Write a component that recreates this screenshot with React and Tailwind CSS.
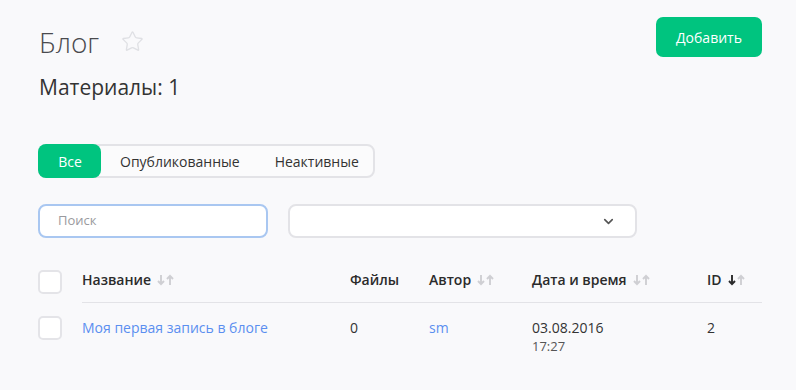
import { ChevronDown, Star } from "lucide-react";

function SortArrows({ active }) {
  return (
    <span className="ml-[6px] inline-flex items-center gap-[1px]">
      <svg width="8" height="12" viewBox="0 0 8 12" fill="none">
        <path
          d="M4 1v9M1 7l3 3.2L7 7"
          stroke={active === "down" ? "#2b2b2b" : "#cfcfd3"}
          strokeWidth="1.9"
        />
      </svg>
      <svg width="8" height="12" viewBox="0 0 8 12" fill="none">
        <path d="M4 11V2M1 5l3-3.2L7 5" stroke="#cfcfd3" strokeWidth="1.9" />
      </svg>
    </span>
  );
}

function Checkbox() {
  return (
    <div className="h-6 w-6 rounded-[5px] border-2 border-[#e4e4e8] bg-white" />
  );
}

export default function App() {
  return (
    <div
      className="min-h-screen bg-[#f9f9fb] pl-[38px] pr-[34px] pt-[17px] text-[#2b2b2b]"
      style={{ fontFamily: '"Open Sans", "Noto Sans", sans-serif' }}
    >
      <div className="flex items-start justify-between">
        <div>
          <div className="mt-[7px] flex items-center">
            <h1 className="pl-[1px] text-[28px] font-light leading-[36px] text-[#4a4a4e]">
              Блог
            </h1>
            <Star
              size={23}
              strokeWidth={1.4}
              className="ml-[22px] mt-[-2px] text-[#dfe0e4]"
            />
          </div>
          <div className="mt-[13px] pl-[1px] text-[21px] leading-[28px] text-[#333]">
            Материалы: 1
          </div>
        </div>
        <button className="h-10 w-[106px] rounded-[7px] bg-[#00c47f] text-[14px] font-medium text-white">
          Добавить
        </button>
      </div>

      <div className="mt-[43px] inline-flex h-[34px] rounded-lg border-2 border-[#e3e3e7] bg-[#fbfbfc] text-[14px]">
        <button className="relative -my-[2px] -ml-[2px] h-[34px] w-[63px] rounded-lg bg-[#00c47f] pl-[1px] text-white">
          Все
        </button>
        <button className="pl-[19px] pr-[19px] text-[#333]">Опубликованные</button>
        <button className="pl-[16px] pr-[14px] text-[#333]">Неактивные</button>
      </div>

      <div className="mt-[26px] flex gap-5">
        <div className="flex h-[34px] w-[230px] items-center rounded-lg border-2 border-[#a9c7f1] bg-white px-[18px] text-[13px] text-[#9a9a9e]">
          Поиск
        </div>
        <div className="flex h-[34px] w-[349px] items-center justify-end rounded-lg border-2 border-[#e3e3e7] bg-white pr-[19px]">
          <ChevronDown size={15} strokeWidth={2.6} className="text-[#555]" />
        </div>
      </div>

      <div className="mt-[31px] text-[14px]">
        <div className="flex h-[34px]">
          <div className="w-[44px] pt-[1px]">
            <Checkbox />
          </div>
          <div className="flex flex-1 items-start border-b border-[#e3e3e7] pt-[1px] font-semibold leading-5 text-[#2b2b2b]">
            <div className="flex w-[268px] items-center">
              Название
              <SortArrows />
            </div>
            <div className="w-[79px]">Файлы</div>
            <div className="flex w-[103px] items-center">
              Автор
              <SortArrows />
            </div>
            <div className="flex w-[175px] items-center">
              Дата и время
              <SortArrows />
            </div>
            <div className="flex items-center">
              ID
              <SortArrows active="down" />
            </div>
          </div>
        </div>

        <div className="flex">
          <div className="w-[44px] pt-[13px]">
            <Checkbox />
          </div>
          <div className="flex flex-1 items-start pt-[15px] leading-5 text-[#333]">
            <div className="w-[268px] text-[#5b8ff0]">Моя первая запись в блоге</div>
            <div className="w-[79px]">0</div>
            <div className="w-[103px] text-[#5b8ff0]">sm</div>
            <div className="w-[175px]">
              <div>03.08.2016</div>
              <div className="text-[13px] leading-4 text-[#555]">17:27</div>
            </div>
            <div>2</div>
          </div>
        </div>
      </div>
    </div>
  );
}
